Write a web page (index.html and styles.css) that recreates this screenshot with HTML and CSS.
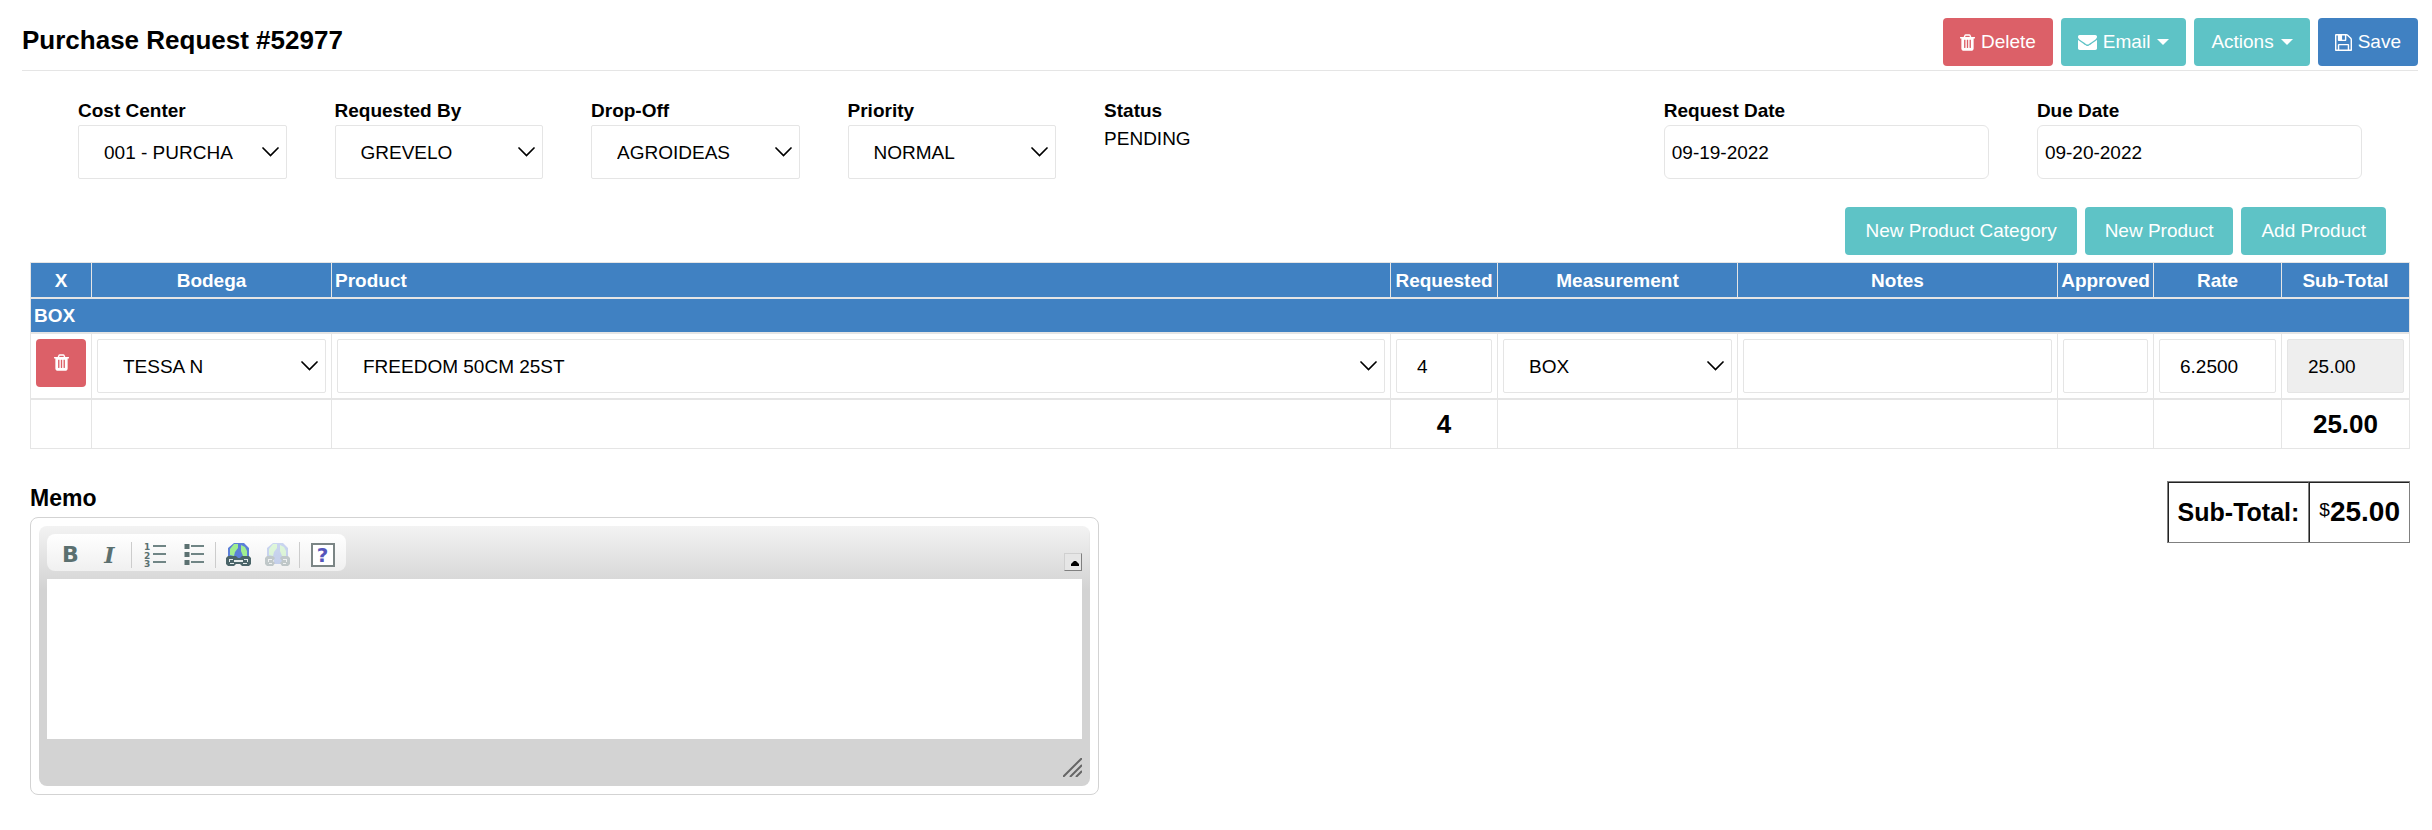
FILE: index.html
```html
<!DOCTYPE html>
<html lang="en">
<head>
    <meta charset="UTF-8">
    <meta name="viewport" content="width=device-width, initial-scale=1.0">
    <title>Purchase Request #52977</title>
    <link rel="stylesheet" href="styles.css">
</head>
<body>
    <svg class="sprite" aria-hidden="true">
        <symbol id="trash" viewBox="192 128 1408 1536">
            <path d="M704 1376v-704q0-14-9-23t-23-9h-64q-14 0-23 9t-9 23v704q0 14 9 23t23 9h64q14 0 23-9t9-23zm256 0v-704q0-14-9-23t-23-9h-64q-14 0-23 9t-9 23v704q0 14 9 23t23 9h64q14 0 23-9t9-23zm256 0v-704q0-14-9-23t-23-9h-64q-14 0-23 9t-9 23v704q0 14 9 23t23 9h64q14 0 23-9t9-23zm-544-992h448l-48-117q-7-9-17-11h-317q-10 2-17 11zm928 32v64q0 14-9 23t-23 9h-96v948q0 83-47 143.5t-113 60.5h-832q-66 0-113-58.5t-47-141.5v-952h-96q-14 0-23-9t-9-23v-64q0-14 9-23t23-9h309l70-167q15-37 54-63t79-26h320q40 0 79 26t54 63l70 167h309q14 0 23 9t9 23z"/>
        </symbol>
        <symbol id="globe" viewBox="0 0 25 25">
            <path fill="#5b7fd8" d="M8 1h10l5 5v9h-6v7H9v-7H2V6z"/>
            <path fill="#a0ee90" d="M8 2h4v4l-3 4-1 4-4-1V7zM15 3l4 2 2 4v5h-4l-2-5z"/>
        </symbol>
    </svg>

    <div class="page">
        <header class="page-header">
            <h1>Purchase Request #52977</h1>
            <div class="toolbar">
                <button type="button" class="btn btn-danger"><svg class="icon-trash"><use href="#trash"/></svg>Delete</button>
                <button type="button" class="btn btn-info"><svg class="icon-mail" viewBox="0 256 1792 1408"><path d="M1792 710v794q0 66-47 113t-113 47h-1472q-66 0-113-47t-47-113v-794q44 49 101 87 362 246 497 345 57 42 92.5 65.5t94.5 48 110 24.5h2q51 0 110-24.5t94.5-48 92.5-65.5q170-123 498-345 57-39 100-87zm0-294q0 79-49 151t-122 123q-376 261-468 325-10 7-42.5 31t-54 38.5-52 32.5-57.5 27-50 9h-2q-23 0-50-9t-57.5-27-52-32.5-54-38.5-42.5-31q-91-64-262-182.5t-205-142.5q-62-42-117-115.5t-55-136.5q0-78 41.5-130t118.5-52h1472q65 0 112.5 47t47.5 113z"/></svg>Email<span class="caret"></span></button>
                <button type="button" class="btn btn-info">Actions<span class="caret"></span></button>
                <button type="button" class="btn btn-primary"><svg class="icon-save" viewBox="128 128 1536 1536"><path d="M512 1536h768v-384h-768v384zm896 0h128v-896q0-14-10-38.5t-20-34.5l-281-281q-10-10-34-20t-39-10v416q0 40-28 68t-68 28h-576q-40 0-68-28t-28-68v-416h-128v1280h128v-416q0-40 28-68t68-28h832q40 0 68 28t28 68v416zm-384-928v-320q0-13-9.5-22.5t-22.5-9.5h-192q-13 0-22.5 9.5t-9.5 22.5v320q0 13 9.5 22.5t22.5 9.5h192q13 0 22.5-9.5t9.5-22.5zm640 32v928q0 40-28 68t-68 28h-1344q-40 0-68-28t-28-68v-1344q0-40 28-68t68-28h928q40 0 88 20t76 48l280 280q28 28 48 76t20 88z"/></svg>Save</button>
            </div>
        </header>

        <div class="details">
            <div class="field">
                <label for="costCenter">Cost Center</label>
                <select id="costCenter" class="control"><option>001 - PURCHA</option></select>
            </div>
            <div class="field">
                <label for="requestedBy">Requested By</label>
                <select id="requestedBy" class="control"><option>GREVELO</option></select>
            </div>
            <div class="field">
                <label for="dropOff">Drop-Off</label>
                <select id="dropOff" class="control"><option>AGROIDEAS</option></select>
            </div>
            <div class="field">
                <label for="priority">Priority</label>
                <select id="priority" class="control"><option>NORMAL</option></select>
            </div>
            <div class="field status">
                <strong>Status</strong>
                <span>PENDING</span>
            </div>
            <div class="field request-date">
                <label for="requestDate">Request Date</label>
                <input type="text" id="requestDate" class="control date" value="09-19-2022">
            </div>
            <div class="field">
                <label for="dueDate">Due Date</label>
                <input type="text" id="dueDate" class="control date" value="09-20-2022">
            </div>
        </div>

        <div class="product-actions">
            <button type="button" class="btn btn-info">New Product Category</button>
            <button type="button" class="btn btn-info">New Product</button>
            <button type="button" class="btn btn-info">Add Product</button>
        </div>

        <div class="content">
            <table class="products">
                <colgroup>
                    <col class="col-remove">
                    <col class="col-bodega">
                    <col>
                    <col class="col-requested">
                    <col class="col-measurement">
                    <col class="col-notes">
                    <col class="col-approved">
                    <col class="col-amount">
                    <col class="col-amount">
                </colgroup>
                <thead>
                    <tr>
                        <th>X</th>
                        <th>Bodega</th>
                        <th class="left">Product</th>
                        <th>Requested</th>
                        <th>Measurement</th>
                        <th>Notes</th>
                        <th>Approved</th>
                        <th>Rate</th>
                        <th>Sub-Total</th>
                    </tr>
                </thead>
                <tbody>
                    <tr>
                        <th class="left group" colspan="9">BOX</th>
                    </tr>
                    <tr class="line">
                        <td><button type="button" class="btn btn-danger btn-remove" aria-label="Remove product"><svg class="icon-trash"><use href="#trash"/></svg></button></td>
                        <td><select class="control" aria-label="Bodega"><option>TESSA N</option></select></td>
                        <td><select class="control" aria-label="Product"><option>FREEDOM 50CM 25ST</option></select></td>
                        <td><input type="text" class="control" aria-label="Requested" value="4"></td>
                        <td><select class="control" aria-label="Measurement"><option>BOX</option></select></td>
                        <td><input type="text" class="control" aria-label="Notes"></td>
                        <td><input type="text" class="control" aria-label="Approved"></td>
                        <td><input type="text" class="control" aria-label="Rate" value="6.2500"></td>
                        <td><input type="text" class="control" aria-label="Sub-Total" value="25.00" readonly></td>
                    </tr>
                </tbody>
                <tfoot>
                    <tr>
                        <td></td>
                        <td></td>
                        <td></td>
                        <td>4</td>
                        <td></td>
                        <td></td>
                        <td></td>
                        <td></td>
                        <td>25.00</td>
                    </tr>
                </tfoot>
            </table>

            <div class="bottom">
                <div class="memo">
                    <label for="memo">Memo</label>
                    <div class="editor">
                        <div class="editor-inner">
                            <div class="editor-top">
                                <div class="editor-tools">
                                    <button type="button" class="tool bold" aria-label="Bold">B</button>
                                    <button type="button" class="tool italic" aria-label="Italic">I</button>
                                    <span class="separator"></span>
                                    <button type="button" class="tool" aria-label="Numbered list">
                                        <svg class="icon-list" viewBox="0 0 24 26">
                                            <g class="digits"><text x="1" y="8">1</text><text x="1" y="17">2</text><text x="1" y="25">3</text></g>
                                            <path d="M10 4h13M10 12h13M10 20h13"/>
                                        </svg>
                                    </button>
                                    <button type="button" class="tool" aria-label="Bulleted list">
                                        <svg class="icon-list" viewBox="0 0 24 26">
                                            <path d="M9 4h13M9 12h13M9 20h13"/>
                                            <path class="bullets" d="M5 2v5M5 10v5M5 18v5"/>
                                        </svg>
                                    </button>
                                    <span class="separator"></span>
                                    <button type="button" class="tool" aria-label="Link">
                                        <svg class="icon-link" viewBox="0 0 25 25">
                                            <use href="#globe"/>
                                            <path fill="#4a6468" d="M2 14h8l2 2h2l2-2h7l2 2v6l-2 2h-7l-2-2h-4l-2 2H2l-2-2v-6z"/>
                                            <path fill="#e3eaea" d="M3 17h4v1H4v2H3zM8 18h9v2H8zM18 17h4v3h-1v-2h-3zM4 21h4v1H4zM17 21h4v1h-4z"/>
                                        </svg>
                                    </button>
                                    <button type="button" class="tool" aria-label="Unlink" disabled>
                                        <svg class="icon-link" viewBox="0 0 25 25">
                                            <use href="#globe"/>
                                            <path fill="#4a6468" d="M2 14h6l2 2-2 3 2 2-2 3H2l-2-2v-6zM17 14h6l2 2v6l-2 2h-6l-2-3 2-2-2-3z"/>
                                            <path fill="#e3eaea" d="M3 17h4v1H4v2H3zM18 17h4v3h-1v-2h-3zM4 21h3v1H4zM18 21h3v1h-3z"/>
                                        </svg>
                                    </button>
                                    <span class="separator"></span>
                                    <button type="button" class="tool" aria-label="About"><span class="help">?</span></button>
                                </div>
                                <button type="button" class="collapse" aria-label="Collapse toolbar"><svg viewBox="0 0 8 5"><path d="M3 0h2l3 3v2H0V3z"/></svg></button>
                            </div>
                            <textarea id="memo"></textarea>
                            <div class="editor-footer">
                                <svg class="resizer" viewBox="0 0 19 19"><path d="M0 19L19 0M7 19L19 7M13 19l6-6"/></svg>
                            </div>
                        </div>
                    </div>
                </div>

                <table class="summary">
                    <tr>
                        <th>Sub-Total:</th>
                        <td><sup>$</sup>25.00</td>
                    </tr>
                </table>
            </div>
        </div>
    </div>
</body>
</html>
```
FILE: styles.css
```css
* {
    box-sizing: border-box;
}
body {
    font-family: "Liberation Sans", Arial, sans-serif;
    font-size: 19px;
    line-height: 22px;
    margin: 0;
    color: #000;
    background-color: #fff;
}
button, input, select, textarea {
    font: inherit;
    color: inherit;
}
svg {
    display: block;
    fill: currentColor;
}
.sprite {
    display: none;
}
.page {
    padding: 18px 14px 32px 22px;
}

/* Header */
.page-header {
    display: flex;
    justify-content: space-between;
    padding-bottom: 4px;
    border-bottom: 1px solid #e5e5e5;
}
.page-header h1 {
    font-size: 26px;
    line-height: 44px;
    margin: 0;
}
.toolbar {
    display: flex;
    gap: 8px;
}
.btn {
    display: flex;
    align-items: center;
    justify-content: center;
    gap: 6px;
    height: 48px;
    padding: 0 17px;
    border: none;
    border-radius: 4px;
    color: #fff;
    cursor: pointer;
}
.btn-danger {
    background-color: #dc6068;
}
.btn-info {
    background-color: #5ec3c6;
}
.btn-primary {
    background-color: #4081c2;
}
.caret {
    margin-left: 1px;
    border: 6px solid transparent;
    border-top-color: #fff;
    border-bottom: 0;
}
.icon-trash {
    width: 15px;
    height: 17px;
}
.icon-mail {
    width: 19px;
    height: 15px;
}
.icon-save {
    width: 17px;
    height: 17px;
}

/* Request details */
.details {
    display: grid;
    grid-template-columns: repeat(5, 11fr) 13fr repeat(2, 16fr);
    padding: 28px 32px;
}
.field {
    padding: 0 24px;
    min-width: 0;
}
.field label,
.field strong {
    display: block;
    margin-bottom: 2px;
    line-height: 24px;
    font-weight: bold;
}
.status span {
    line-height: 28px;
}
.request-date {
    grid-column: 7;
}
.control {
    display: block;
    width: 100%;
    height: 54px;
    padding: 2px 20px 0;
    border: 1px solid #e5e5e5;
    border-radius: 2px;
    background-color: #fff;
}
select.control {
    appearance: none;
    padding: 2px 50px 0 25px;
    background-image: url("data:image/svg+xml,%3Csvg xmlns='http://www.w3.org/2000/svg' viewBox='0 0 17 10'%3E%3Cpath d='M1 1l7.5 7.5L16 1' fill='none' stroke='%23000' stroke-width='1.7' stroke-linecap='round'/%3E%3C/svg%3E");
    background-repeat: no-repeat;
    background-position: right 7px center;
    background-size: 17px 10px;
}
.control.date {
    padding: 2px 7px 0;
    border-radius: 6px;
}
.control:read-only:not(select) {
    background-color: #eee;
}

.product-actions {
    display: flex;
    justify-content: flex-end;
    gap: 8px;
    padding: 0 32px 7px;
}
.product-actions .btn {
    padding: 0 20px;
}

/* Products table */
.content {
    padding: 0 8px;
}
.products {
    width: 100%;
    table-layout: fixed;
    border-collapse: collapse;
}
.products th,
.products td {
    border: 1px solid #e5e5e5;
    border-bottom-width: 2px;
}
.products th {
    height: 35px;
    padding: 2px 3px 0;
    color: #fff;
    background-color: #4081c2;
}
.products .left {
    text-align: left;
}
.products .line td {
    height: 66px;
    padding: 5px;
    vertical-align: top;
}
.products tfoot td {
    height: 50px;
    padding: 0;
    border-bottom-width: 1px;
    font-size: 26px;
    font-weight: bold;
    text-align: center;
}
.col-remove {
    width: 61px;
}
.col-bodega,
.col-measurement {
    width: 240px;
}
.col-requested {
    width: 107px;
}
.col-notes {
    width: 320px;
}
.col-approved {
    width: 96px;
}
.col-amount {
    width: 128px;
}
.btn-remove {
    width: 100%;
    padding: 0;
}

/* Memo and totals */
.bottom {
    display: flex;
    justify-content: space-between;
    align-items: flex-start;
    margin-top: 32px;
}
.memo {
    width: 44.9%;
}
.memo label {
    display: block;
    margin-bottom: 2px;
    font-size: 23px;
    line-height: 34px;
    font-weight: bold;
}
.editor {
    padding: 8px;
    border: 1px solid #d3d3d3;
    border-radius: 8px;
}
.editor-inner {
    padding: 8px;
    border-radius: 8px;
    background: #d3d3d3 linear-gradient(#f3f3f3, #d3d3d3) top / 100% 64px no-repeat;
}
.editor-top {
    display: flex;
    justify-content: space-between;
    align-items: flex-end;
    margin-bottom: 8px;
}
.editor-tools {
    display: flex;
    align-items: center;
    height: 37px;
    padding: 4px 4px 0;
    border-radius: 8px;
    background-image: linear-gradient(#fff, #f0f0f0);
}
.tool {
    display: flex;
    align-items: center;
    justify-content: center;
    width: 39px;
    height: 33px;
    padding: 0;
    border: none;
    background: none;
    color: #5b7070;
}
.tool:disabled {
    opacity: 0.3;
}
.bold {
    font: bold 22px "DejaVu Sans", sans-serif;
}
.italic {
    font: italic bold 22px "DejaVu Serif", serif;
}
.separator {
    width: 1px;
    height: 26px;
    margin: 0 3px 0 2px;
    background-color: #ccc;
}
.icon-list {
    width: 24px;
    height: 26px;
    fill: none;
    stroke: #708585;
    stroke-width: 2;
}
.icon-list .digits {
    font: bold 9px "DejaVu Sans", sans-serif;
    fill: #5b7070;
    stroke: none;
}
.icon-list .bullets {
    stroke: #5b7070;
    stroke-width: 5;
}
.icon-link {
    width: 25px;
    height: 25px;
}
.help {
    width: 24px;
    height: 24px;
    border: 2px solid #7b8585;
    background-color: #fff;
    color: #5555bb;
    font: bold 20px/20px "DejaVu Sans", sans-serif;
}
.collapse {
    display: flex;
    justify-content: flex-end;
    align-items: flex-end;
    width: 18px;
    height: 18px;
    padding: 0 2px 4px;
    border: 1px solid #d0d0d0;
    border-right-color: #808080;
    border-bottom-color: #808080;
    background-color: #e6e6e6;
}
.collapse svg {
    width: 8px;
    height: 5px;
}
.editor textarea {
    display: block;
    width: 100%;
    height: 160px;
    padding: 8px;
    border: none;
    resize: none;
    background-color: #fff;
}
.editor-footer {
    display: flex;
    justify-content: flex-end;
    padding: 19px 0;
    margin-bottom: -18px;
}
.resizer {
    width: 19px;
    height: 19px;
    stroke: #666;
    stroke-width: 2;
}
.summary {
    border: 1px solid #808080;
    border-spacing: 0;
}
.summary th,
.summary td {
    height: 60px;
    padding: 0 9px 2px;
    border: solid #222;
    border-width: 1px 0 0 1px;
    font-size: 28px;
    font-weight: bold;
}
.summary th {
    border-right: 1px solid #808080;
    font-size: 25px;
}
.summary sup {
    font-size: 19px;
    font-weight: normal;
    line-height: 0;
    vertical-align: 5px;
}
```
